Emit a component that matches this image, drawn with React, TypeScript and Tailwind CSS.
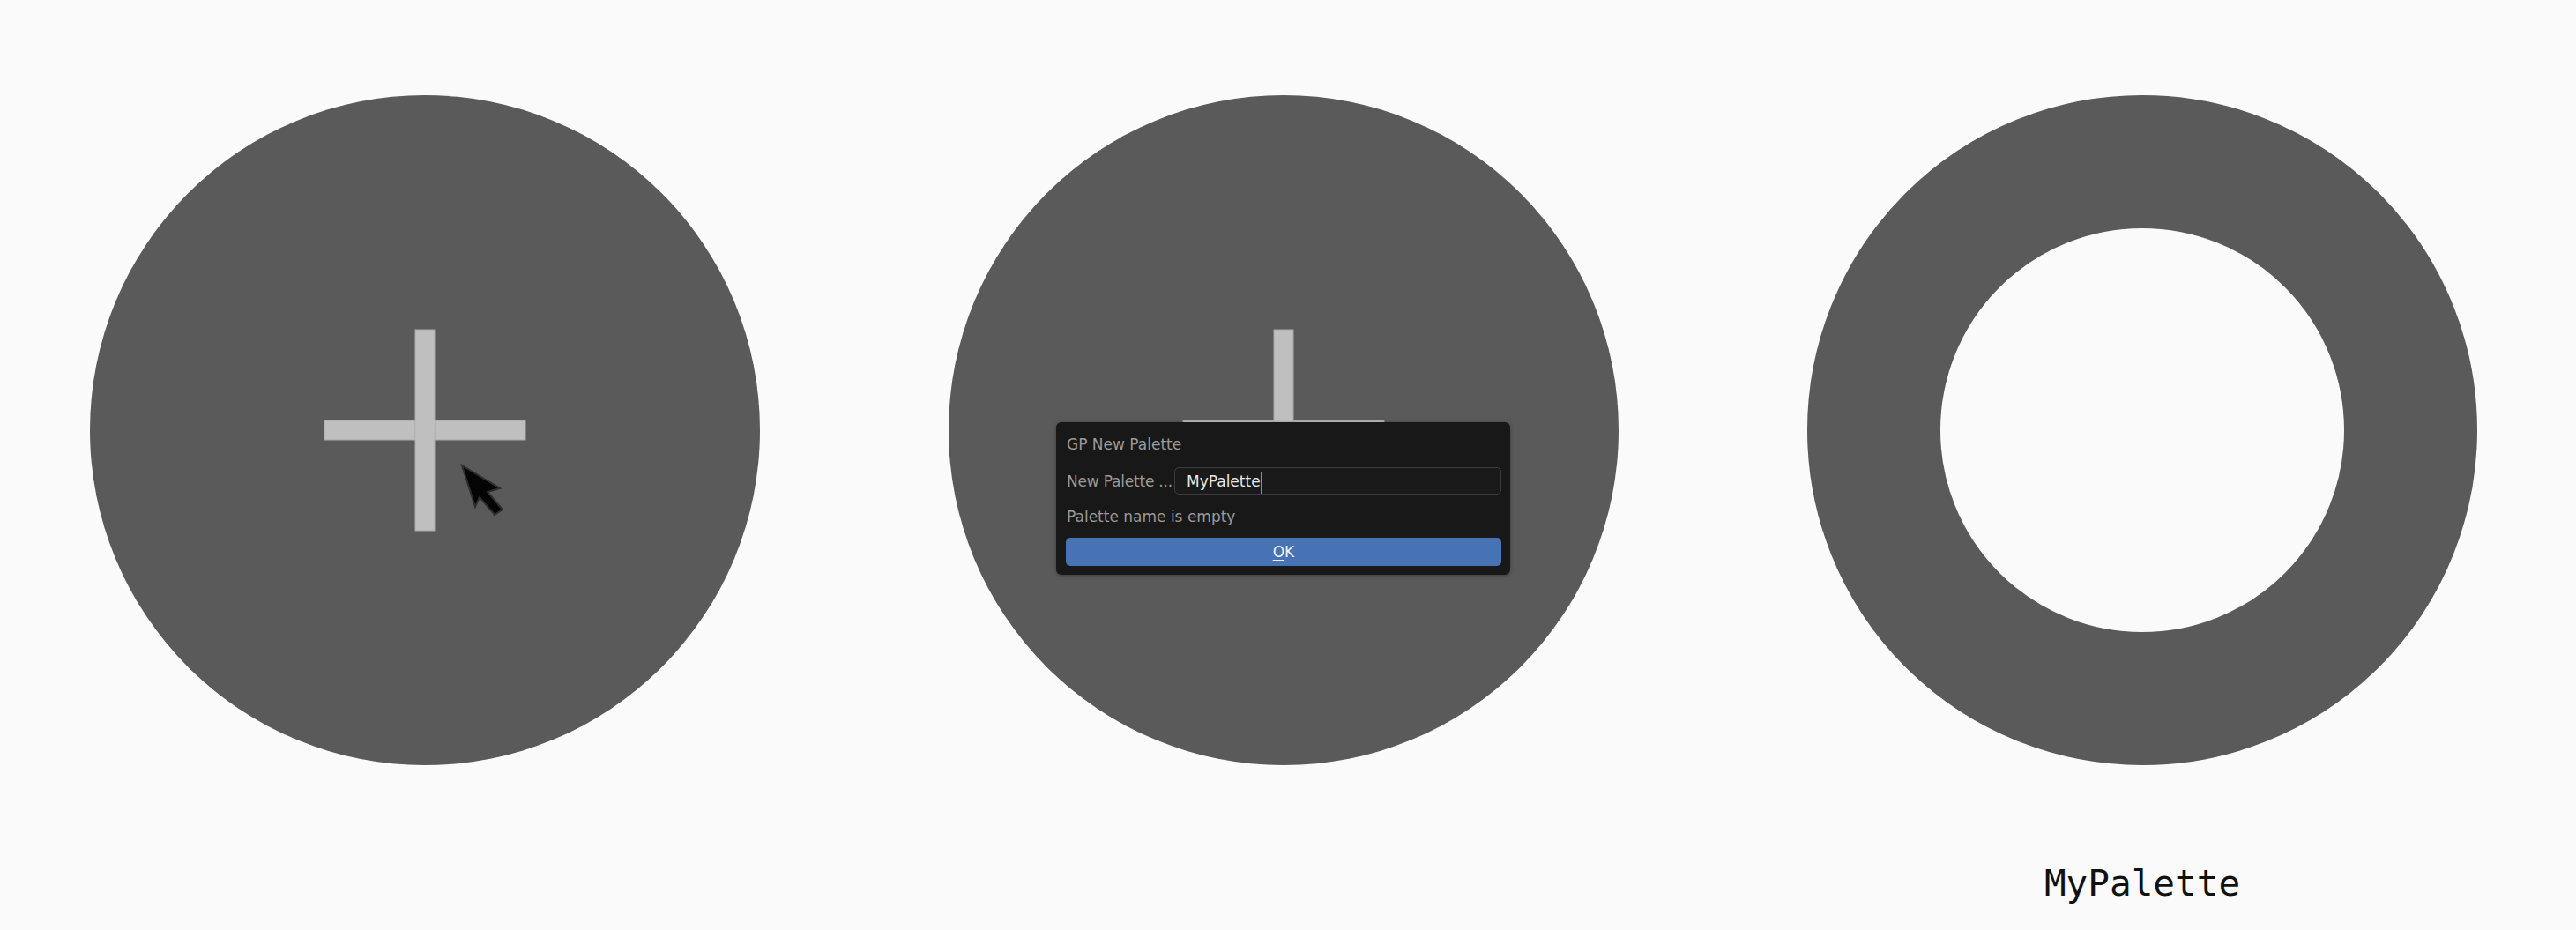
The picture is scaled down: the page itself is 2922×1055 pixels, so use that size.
import React from "react";

function Plus() {
  return (
    <svg width="230" height="230" viewBox="0 0 230 230" className="block">
      <rect x="1" y="104" width="228" height="22" fill="#bfbfbf" stroke="#a9a9a9" strokeWidth="1" />
      <rect x="104" y="1" width="22" height="228" fill="#bfbfbf" stroke="#a9a9a9" strokeWidth="1" />
      <rect x="104.5" y="104.5" width="21" height="21" fill="#bfbfbf" />
    </svg>
  );
}

function Cursor() {
  return (
    <svg width="52" height="60" viewBox="-2 -2 52 60" className="block">
      <polygon
        points="0,0 15,47 20,36 37,56 46,50 29,30 43,26"
        fill="#050505"
        stroke="#2e2e2e"
        strokeWidth="2"
        strokeLinejoin="miter"
      />
    </svg>
  );
}

export default function App() {
  return (
    <div className="w-[2922px] h-[1055px] bg-[#fafafa] flex items-start pl-[102px] pt-[108px] gap-[214px] overflow-hidden">
      {/* Circle 1 */}
      <div className="relative w-[760px] h-[760px] rounded-full bg-[#5a5a5a] flex items-center justify-center shrink-0">
        <Plus />
        <div className="absolute left-[420px] top-[418px]">
          <Cursor />
        </div>
      </div>

      {/* Circle 2 with dialog */}
      <div className="relative w-[760px] h-[760px] rounded-full bg-[#5a5a5a] flex items-center justify-center shrink-0">
        <Plus />
        <div className="absolute left-[122px] top-[371px] w-[515px] h-[173px] bg-[#181818] rounded-[6px] shadow-[0_1px_4px_rgba(0,0,0,0.35)] pl-[11px] pr-[10px] pt-[15px] font-['DejaVu_Sans',sans-serif] text-[17px] leading-[20px] flex flex-col">
          <div className="pl-[1px] text-[#9a9a9a] whitespace-nowrap">GP New Palette</div>
          <div className="mt-[16px] flex items-center h-[31px]">
            <div className="w-[123px] pl-[1px] text-[#9a9a9a] whitespace-nowrap overflow-hidden tracking-[-0.2px]">New Palette ...</div>
            <div className="flex-1 h-[31px] border border-[#3c3c3c] rounded-[5px] bg-[#1a1a1a] flex items-center pl-[13px]">
              <span className="text-[#e8e8e8] whitespace-nowrap">MyPalette</span>
              <span className="inline-block w-[2px] h-[24px] bg-[#5b95ea] mt-[4px]"></span>
            </div>
          </div>
          <div className="mt-[15px] pl-[1px] text-[#9a9a9a] whitespace-nowrap">Palette name is empty</div>
          <div className="mt-[14px] h-[32px] rounded-[5px] bg-[#4772b3] flex items-center justify-center text-[#f0f0f0]">
            <span>
              <span className="underline underline-offset-[3px] decoration-1">O</span>K
            </span>
          </div>
        </div>
      </div>

      {/* Circle 3 ring + label */}
      <div className="flex flex-col items-center shrink-0">
        <div className="w-[760px] h-[760px] rounded-full border-[151px] border-[#5a5a5a] bg-transparent"></div>
        <div className="mt-[110px] h-[48px] leading-[48px] text-[41px] text-[#111111] font-['DejaVu_Sans_Mono',monospace] whitespace-nowrap">
          MyPalette
        </div>
      </div>
    </div>
  );
}
